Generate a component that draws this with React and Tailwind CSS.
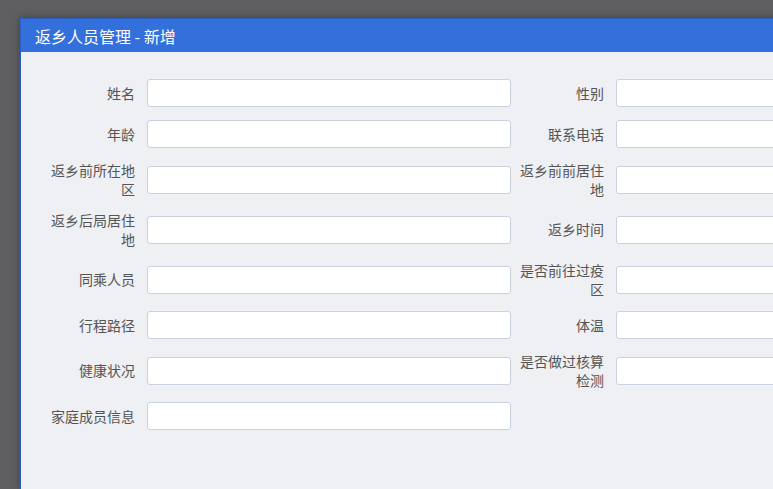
import { Fragment } from 'react';

const FIELDS = [
  ['姓名', '性别'],
  ['年龄', '联系电话'],
  ['返乡前所在地区', '返乡前前居住地'],
  ['返乡后局居住地', '返乡时间'],
  ['同乘人员', '是否前往过疫区'],
  ['行程路径', '体温'],
  ['健康状况', '是否做过核算检测'],
  ['家庭成员信息', null],
];

function Field({ label }) {
  if (!label) return <div />;
  return (
    <div className="flex items-center">
      <label className="w-[88px] shrink-0 text-right text-[14px] leading-[18.5px] text-[#555]">
        {label}
      </label>
      <input
        type="text"
        className="ml-[12px] h-[28px] w-[364px] shrink-0 rounded-[3px] border border-[#c9d1de] bg-white px-2 text-[14px] outline-none"
      />
    </div>
  );
}

export default function App() {
  return (
    <div
      className="h-[489px] w-[773px] overflow-hidden bg-[#5f5f62] pl-[20px] pt-[18px]"
      style={{ fontFamily: '"Noto Sans CJK SC", "Noto Sans", sans-serif' }}
    >
      <div className="h-full w-[900px] border-l border-t border-[#2c5fbf] bg-[#eef0f4] shadow-[0_0_8px_rgba(0,0,0,0.35)]">
        <div className="flex h-[33px] items-center bg-[#3370dc] px-[14px] text-[16px] text-white">
          返乡人员管理 - 新增
        </div>
        <div className="grid grid-cols-[469px_469px] gap-y-[13px] pl-[26px] pt-[27px]">
          {FIELDS.map(([a, b]) => (
            <Fragment key={a}>
              <Field label={a} />
              <Field label={b} />
            </Fragment>
          ))}
        </div>
      </div>
    </div>
  );
}
